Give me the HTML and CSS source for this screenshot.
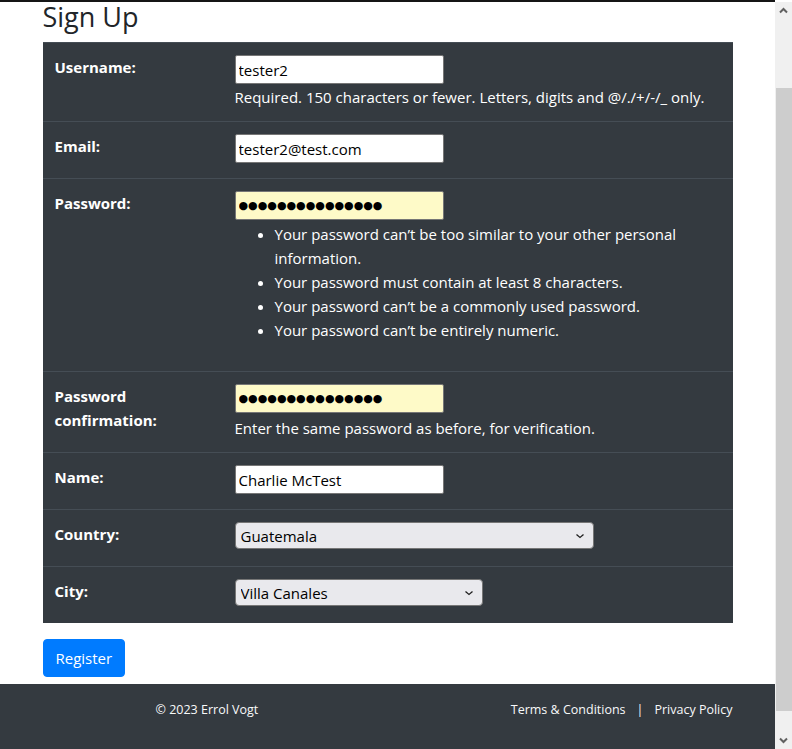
FILE: index.html
```html
<!DOCTYPE html>
<html lang="en">
<head>
<meta charset="utf-8">
<title>Sign Up</title>
<link rel="stylesheet" href="styles.css">
</head>
<body>
<div class="topline"></div>
<main class="container">
  <h3 class="title">Sign Up</h3>
  <form class="signup-form">
    <table class="signup">
      <tr>
        <th>Username:</th>
        <td><input class="field" type="text" value="tester2"><div class="help">Required. 150 characters or fewer. Letters, digits and @/./+/-/_ only.</div></td>
      </tr>
      <tr>
        <th>Email:</th>
        <td><input class="field" type="text" value="tester2@test.com"></td>
      </tr>
      <tr>
        <th>Password:</th>
        <td><input class="field field-secret" type="text" value="●●●●●●●●●●●●●●●">
          <ul class="rules">
            <li>Your password can’t be too similar to your other personal information.</li>
            <li>Your password must contain at least 8 characters.</li>
            <li>Your password can’t be a commonly used password.</li>
            <li>Your password can’t be entirely numeric.</li>
          </ul>
        </td>
      </tr>
      <tr>
        <th>Password confirmation:</th>
        <td><input class="field field-secret" type="text" value="●●●●●●●●●●●●●●●"><div class="help help-loose">Enter the same password as before, for verification.</div></td>
      </tr>
      <tr>
        <th>Name:</th>
        <td><input class="field" type="text" value="Charlie McTest"></td>
      </tr>
      <tr>
        <th>Country:</th>
        <td><select class="select select-country"><option>Guatemala</option></select></td>
      </tr>
      <tr>
        <th>City:</th>
        <td><select class="select select-city"><option>Villa Canales</option></select></td>
      </tr>
    </table>
    <button class="btn" type="button">Register</button>
  </form>
</main>
<footer class="footer">
  <div class="footer-inner">
    <span class="copy">© 2023 Errol Vogt</span>
    <nav class="links"><a href="#">Terms &amp; Conditions</a><span class="sep">|</span><a href="#">Privacy Policy</a></nav>
  </div>
</footer>
<div class="scrollbar">
  <div class="sb-btn sb-up"><svg width="17" height="17" viewBox="0 0 17 17"><path d="M5 10.5 L8.5 7 L12 10.5" fill="none" stroke="#606060" stroke-width="2"/></svg></div>
  <div class="sb-thumb"></div>
  <div class="sb-btn sb-down"><svg width="17" height="17" viewBox="0 0 17 17"><path d="M5 6.5 L8.5 10 L12 6.5" fill="none" stroke="#606060" stroke-width="2"/></svg></div>
</div>
</body>
</html>
```
FILE: styles.css
```css
html, body {
  margin: 0;
  height: 749px;
  overflow: hidden;
}
body {
  margin-right: 17px;
  font-family: "Open Sans", "Liberation Sans", sans-serif;
  font-size: 15px;
  line-height: 24px;
  color: #212529;
  background: #fff;
}
.topline {
  height: 2px;
  margin-right: -17px;
  background: #151515;
}
.container {
  width: 690px;
  margin: 0 auto;
  padding: 0 15px;
}
.title {
  margin: 1px 0 11px;
  font-size: 27px;
  font-weight: 400;
  line-height: 28px;
  color: #212529;
}
.signup-form {
  margin: 0;
}
.signup {
  width: 100%;
  border-collapse: collapse;
  background: #343a40;
  color: #fff;
  margin-bottom: 16px;
}
.signup th,
.signup td {
  padding: 12px;
  border-top: 1px solid #454d55;
  vertical-align: top;
  text-align: left;
}
.signup th {
  width: 156px;
  font-weight: 700;
}
.field {
  display: block;
  box-sizing: border-box;
  width: 209px;
  height: 29px;
  margin: 0 0 3px;
  padding: 0 3px;
  border: 1px solid #767676;
  border-radius: 2px;
  font-family: inherit;
  font-size: 15px;
  color: #000;
  background: #fff;
}
.field-secret {
  background: #fefac8;
  font-family: "DejaVu Sans", sans-serif;
  font-size: 11px;
  letter-spacing: 0;
}
.help {
  margin-top: -2px;
}
.help-loose {
  margin-top: 0;
}
.rules {
  margin: -1px 0 17px;
  padding-left: 40px;
}
.select {
  display: block;
  box-sizing: border-box;
  height: 27px;
  margin: 0 0 5px;
  padding: 0 24px 0 5px;
  border: 1px solid #767676;
  border-radius: 4px;
  font-family: inherit;
  font-size: 15px;
  color: #000;
  -webkit-appearance: none;
  appearance: none;
  background: #e9e9ed url("data:image/svg+xml,%3Csvg xmlns='http://www.w3.org/2000/svg' width='10' height='6' viewBox='0 0 10 6'%3E%3Cpath d='M1.5 1.5 L5 4.5 L8.5 1.5' fill='none' stroke='%23222' stroke-width='1.3'/%3E%3C/svg%3E") no-repeat right 8px center;
}
.select-country {
  width: 359px;
}
.select-city {
  width: 248px;
}
.btn {
  display: block;
  margin: 0 0 7px;
  padding: 6px 12px;
  border: 1px solid #007bff;
  border-radius: 4px;
  background: #007bff;
  color: #fff;
  font-family: inherit;
  font-size: 15px;
  line-height: 24px;
}
.footer {
  height: 120px;
  padding-top: 15px;
  background: #343a40;
  color: #f8f9fa;
  font-size: 12.5px;
  line-height: 21px;
}
.footer-inner {
  width: 690px;
  margin: 0 auto;
  display: flex;
  justify-content: space-between;
}
.copy {
  margin-left: 113px;
}
.links a {
  color: #f8f9fa;
  text-decoration: none;
}
.sep {
  margin: 0 11px;
}
.scrollbar {
  position: fixed;
  top: 2px;
  right: 0;
  bottom: 0;
  width: 17px;
  background: #f0f0f0;
}
.sb-btn {
  position: absolute;
  left: 0;
  width: 17px;
  height: 17px;
}
.sb-btn svg {
  display: block;
}
.sb-up {
  top: 0;
}
.sb-down {
  bottom: 0;
}
.sb-thumb {
  position: absolute;
  top: 86px;
  left: 1px;
  right: 0;
  height: 623px;
  background: #cdcdcd;
}
```
